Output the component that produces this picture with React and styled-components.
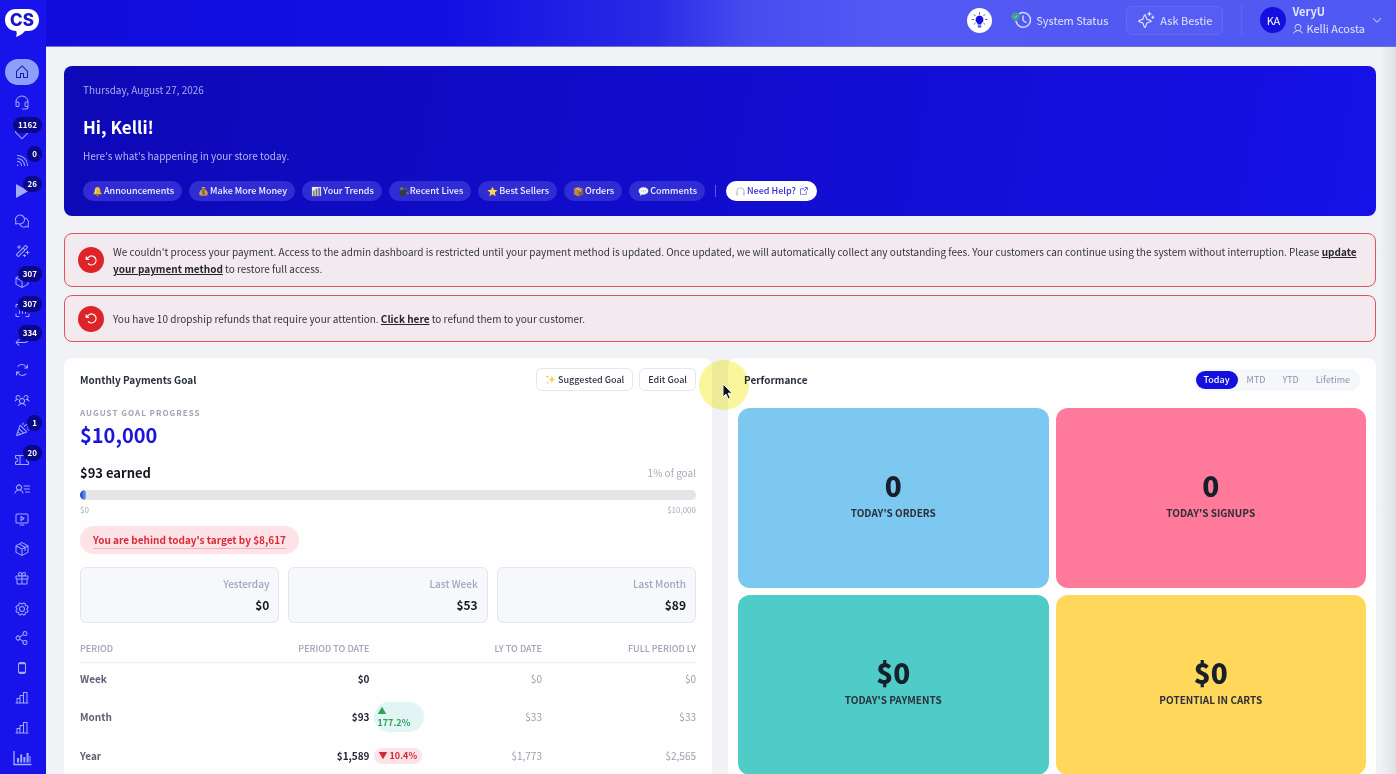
import React, { useState } from 'react';
import styled, { createGlobalStyle, css } from 'styled-components';
import {
  PiHouse,
  PiHeadset,
  PiCaretDown,
  PiDiamond,
  PiRss,
  PiChatsCircle,
  PiMagicWand,
  PiCube,
  PiArrowUDownLeft,
  PiArrowsClockwise,
  PiUsersThree,
  PiConfetti,
  PiTicket,
  PiUserList,
  PiMonitorPlay,
  PiPackage,
  PiGift,
  PiGear,
  PiShareNetwork,
  PiDeviceMobile,
  PiChartBar,
  PiSparkle,
  PiUser,
  PiArrowSquareOut,
  PiArrowCounterClockwiseBold,
} from 'react-icons/pi';

const GlobalStyle = createGlobalStyle`
  * {
    box-sizing: border-box;
  }

  body {
    margin: 0;
    background: #f0f2f6;
    color: #1f2937;
    font-family: 'Noto Sans CJK SC', 'Noto Sans', sans-serif;
    font-size: 10px;
    line-height: 16px;
  }

  button {
    font-family: inherit;
    cursor: pointer;
  }

  h1, h2, p {
    margin: 0;
  }
`;

const Shell = styled.div`
  display: grid;
  grid-template-columns: 46px minmax(0, 1fr);
  grid-template-rows: 47px minmax(0, 1fr);
  height: 100vh;
  overflow: hidden;
`;

/* Sidebar */

const Sidebar = styled.aside`
  grid-row: 1 / 3;
  display: flex;
  flex-direction: column;
  align-items: center;
  gap: 21px;
  padding: 9px 4px 3px 2px;
  background: #1713ea;
`;

const Logo = styled.a`
  display: block;
  height: 29px;
`;

const Nav = styled.nav`
  flex: 1;
  display: flex;
  flex-direction: column;
  justify-content: space-between;
`;

const NavItem = styled.a`
  position: relative;
  display: flex;
  align-items: center;
  justify-content: center;
  width: 34px;
  height: 26px;
  border-radius: 13px;
  color: ${({ $active }) => ($active ? '#1a1aa8' : '#a3abfa')};
  background: ${({ $active }) => ($active ? '#8e9ffa' : 'transparent')};
`;

const NavBadge = styled.span`
  position: absolute;
  top: -2px;
  right: -3px;
  padding: 0 5px;
  border-radius: 8px;
  background: #0a0788;
  color: #fff;
  font-size: 8px;
  font-weight: 700;
  line-height: 16px;
`;

/* Header */

const Header = styled.header`
  display: flex;
  align-items: center;
  justify-content: flex-end;
  padding: 0 13px 6px 0;
  background: linear-gradient(90deg, #110cdc 0%, #1310e2 30%, #2a2ae6 45%, #474cef 52%, #5359f3 62%, #5159f3 100%);
  border-bottom: 1px solid #6d71cf;
  color: #e2e5ff;
`;

const RoundButton = styled.button`
  display: flex;
  align-items: center;
  justify-content: center;
  width: 25px;
  height: 25px;
  margin-right: 18px;
  padding: 0;
  border: 0;
  border-radius: 50%;
  background: #fff;
`;

const HeaderButton = styled.button`
  display: flex;
  align-items: center;
  gap: 5px;
  height: 29px;
  padding: 0 ${({ $outlined }) => ($outlined ? '10px' : '0')};
  margin-left: ${({ $outlined }) => ($outlined ? '17px' : '0')};
  border: 1px solid ${({ $outlined }) => ($outlined ? '#636bf5' : 'transparent')};
  border-radius: 6px;
  background: ${({ $outlined }) => ($outlined ? '#565df4' : 'transparent')};
  color: inherit;
  font-size: 11px;
`;

const HeaderDivider = styled.span`
  width: 1px;
  height: 30px;
  margin: 0 18px;
  background: #5e66f5;
`;

const Account = styled.button`
  display: flex;
  align-items: center;
  gap: 6px;
  padding: 0;
  border: 0;
  background: transparent;
  color: #e2e5ff;
  text-align: left;
`;

const Avatar = styled.span`
  display: flex;
  align-items: center;
  justify-content: center;
  width: 26px;
  height: 26px;
  border-radius: 50%;
  background: #140fdf;
  font-size: 11px;
  color: #fff;
`;

const AccountName = styled.span`
  display: grid;
  font-size: 11px;
  line-height: 17px;
`;

const UserLine = styled.span`
  display: flex;
  align-items: center;
  gap: 2px;
`;

/* Main area */

const Main = styled.main`
  min-height: 0;
  overflow: hidden;
  padding: 19px 20px 0 18px;
  background: linear-gradient(270deg, #dfe1e6 0, #f0f2f6 16px);
`;

const Banner = styled.section`
  padding: 16px 19px 15px;
  border-radius: 8px;
  background: linear-gradient(100deg, #0d09b6 0%, #110ccb 45%, #1611e6 100%);
  color: #fff;
`;

const BannerDate = styled.p`
  color: #a9aaf0;
`;

const Greeting = styled.h1`
  margin: 16px 0 8px;
  font-size: 17px;
  font-weight: 700;
  line-height: 26px;
`;

const BannerText = styled.p`
  margin-bottom: 17px;
  color: #b6b7f3;
`;

const Shortcuts = styled.div`
  display: flex;
  flex-wrap: wrap;
  align-items: center;
  gap: 7px;
`;

const Shortcut = styled.a`
  display: flex;
  align-items: center;
  gap: 1px;
  height: 20px;
  padding: 0 8px 0 9px;
  border-radius: 10px;
  background: ${({ $light }) => ($light ? '#fff' : '#302cd4')};
  color: ${({ $light }) => ($light ? '#2f2bd0' : '#f1f1ff')};
  font-size: 9px;
  font-weight: 500;
  text-decoration: none;
`;

const ShortcutDivider = styled.span`
  width: 1px;
  height: 12px;
  margin: 0 3px;
  background: #5a57e0;
`;

const Alerts = styled.div`
  display: grid;
  gap: 8px;
  margin: 17px 0 16px;
`;

const Alert = styled.div`
  display: flex;
  align-items: center;
  gap: 9px;
  padding: 9px 13px;
  border: 1px solid #e0535b;
  border-radius: 8px;
  background: #f2eaef;
  min-height: 47px;
`;

const AlertIcon = styled.span`
  flex: none;
  display: flex;
  align-items: center;
  justify-content: center;
  width: 26px;
  height: 26px;
  border-radius: 50%;
  background: #de2429;
  color: #fff;
`;

const AlertText = styled.p`
  color: #33353f;
  line-height: 17px;

  a {
    color: #26262e;
    font-weight: 700;
  }
`;

const Columns = styled.div`
  display: grid;
  grid-template-columns: repeat(2, minmax(0, 1fr));
  gap: 16px;
`;

const Panel = styled.section`
  position: relative;
  padding: 10px ${({ $tight }) => ($tight ? '10px' : '16px')};
  border-radius: 8px;
  background: #fefefe;
`;

const PanelHeader = styled.div`
  display: flex;
  align-items: center;
  gap: 6px;
  height: 23px;
  padding: 0 ${({ $inset }) => ($inset ? '6px' : '0')};
`;

const PanelTitle = styled.h2`
  margin-right: auto;
  color: #2a3042;
  font-size: 10px;
  font-weight: 700;
`;

const SmallButton = styled.button`
  display: flex;
  align-items: center;
  gap: 2px;
  height: 23px;
  padding: 0 8px;
  border: 1px solid #e5e8f0;
  border-radius: 6px;
  background: #fff;
  color: #2f3444;
  font-size: 9px;
  font-weight: 500;
`;

const Overline = styled.p`
  margin-top: 14px;
  color: #a0a3b1;
  font-size: 8px;
  font-weight: 700;
  letter-spacing: 1px;
`;

const GoalAmount = styled.p`
  margin-bottom: 17px;
  color: #1b14d9;
  font-size: 20px;
  font-weight: 700;
  line-height: 27px;
`;

const Spread = styled.div`
  display: flex;
  align-items: center;
  justify-content: space-between;
  color: #a9acb8;
  font-size: ${({ $small }) => ($small ? '8px' : '10px')};
`;

const Earned = styled.strong`
  color: #14171f;
  font-size: 13px;
`;

const Track = styled.div`
  height: 10px;
  margin: 9px 0 2px;
  border-radius: 5px;
  background: #e3e4e8;
  overflow: hidden;
`;

const Fill = styled.div`
  height: 100%;
  border-radius: 5px;
  background: linear-gradient(90deg, #2a2bd6, #63b7d8);
`;

const BehindPill = styled.p`
  width: fit-content;
  margin: 8px 0 13px;
  padding: 5px 13px;
  border-radius: 14px;
  background: #fde3e7;
  color: #d92b35;
  font-weight: 700;
  line-height: 17px;

  span {
    display: block;
    border-bottom: 1px solid #efb5bc;
  }
`;

const Stats = styled.div`
  display: grid;
  grid-template-columns: repeat(3, minmax(0, 1fr));
  gap: 9px;
`;

const Stat = styled.div`
  display: grid;
  gap: 5px;
  padding: 8px 9px 9px;
  border: 1px solid #e3e6ee;
  border-radius: 6px;
  background: #f7f8fb;
  color: #a3a5bd;
  font-weight: 500;
  text-align: right;

  strong {
    color: #14171f;
    font-size: 12px;
  }
`;

const Table = styled.table`
  width: 100%;
  margin-top: 13px;
  border-collapse: collapse;
  table-layout: fixed;
  font-size: 10px;
`;

const cell = css`
  padding: 0;
  text-align: ${({ $left }) => ($left ? 'left' : 'right')};
  width: ${({ $width }) => $width || 'auto'};
`;

const Th = styled.th`
  ${cell}
  height: 26px;
  border-bottom: 1px solid #edf0f6;
  color: #a0a3b3;
  font-size: 9px;
  font-weight: 500;
`;

const Td = styled.td`
  ${cell}
  height: 33px;
  color: ${({ $strong, $left }) => ($strong ? '#23273a' : $left ? '#5d6177' : '#9a9dab')};
  font-weight: ${({ $strong, $left }) => ($strong || $left ? 700 : 400)};
`;

const TrendTd = styled.td`
  padding: 7px 0 7px 4px;
`;

const Trend = styled.span`
  display: ${({ $up }) => ($up ? 'block' : 'inline-block')};
  width: ${({ $up }) => ($up ? '50px' : 'auto')};
  padding: ${({ $up }) => ($up ? '3px 4px' : '0 5px')};
  border-radius: ${({ $up }) => ($up ? '15px' : '8px')};
  background: ${({ $up }) => ($up ? '#e3f4f5' : '#fde3e7')};
  color: ${({ $up }) => ($up ? '#2ba35b' : '#d02a33')};
  font-size: 9px;
  font-weight: 700;
  line-height: ${({ $up }) => ($up ? '12px' : '16px')};
`;

const Tabs = styled.div`
  display: flex;
  align-items: center;
  gap: 1px;
  padding: 2px;
  border-radius: 11px;
  background: #f5f7fb;
`;

const Tab = styled.button`
  height: 18px;
  padding: 0 8px;
  border: 0;
  border-radius: 9px;
  background: ${({ $active }) => ($active ? '#140fdc' : 'transparent')};
  color: ${({ $active }) => ($active ? '#fff' : '#8f92a6')};
  font-size: 9px;
  font-weight: ${({ $active }) => ($active ? 500 : 400)};
`;

const Tiles = styled.div`
  display: grid;
  grid-template-columns: repeat(2, minmax(0, 1fr));
  gap: 7px;
  margin-top: 17px;
`;

const Tile = styled.div`
  display: flex;
  flex-direction: column;
  align-items: center;
  justify-content: center;
  gap: 2px;
  height: 180px;
  padding-bottom: 8px;
  border-radius: 12px;
  background: ${({ $color }) => $color};
  color: #2b2f3a;
  font-size: 10px;
  font-weight: 700;

  strong {
    color: #15202b;
    font-size: 28px;
    line-height: 36px;
  }
`;

const Pointer = styled.div`
  position: absolute;
  top: 2px;
  left: -29px;
  display: flex;
  align-items: center;
  justify-content: center;
  width: 50px;
  height: 50px;
  padding: 13px 0 0 6px;
  border-radius: 50%;
  background: #faf79c;
  mix-blend-mode: multiply;
`;

/* Drawings */

const LogoMark = () => (
  <svg width="34" height="29" viewBox="0 0 34 29" aria-hidden="true">
    <path d="M11 0h12c6.500 0 11 4.500 11 11s-4.500 11-11 11h-3c-2 2.500-5 4.500-9 6 .8-2 .9-4 .3-6C5 22 0 17.500 0 11S4.500 0 11 0z" fill="#fff" />
    <text x="17" y="17" textAnchor="middle" fontFamily="Inter, sans-serif" fontWeight="800" fontSize="17" fill="#1713c9">
      CS
    </text>
  </svg>
);

const Bulb = () => (
  <svg width="17" height="17" viewBox="0 0 17 17" aria-hidden="true">
    <g stroke="#4a50d8" strokeWidth="1" strokeLinecap="round">
      <path d="M8.500 .7v1.600M3.300 2.700l1 1.100M13.700 2.700l-1 1.100M1 7.500h1.600M14.400 7.500H16M3.200 12.200l1-.9M13.800 12.200l-1-.9" />
    </g>
    <path d="M8.500 3.600a4 4 0 0 1 2.500 7.100c-.5.500-.6 1-.6 1.700H6.600c0-.7-.1-1.200-.6-1.700a4 4 0 0 1 2.500-7.100z" fill="#160fe0" />
    <path d="M6.700 13.300h3.600v1.500l-.9 1H7.600l-.9-1z" fill="#5961d6" />
  </svg>
);

const StatusClock = () => (
  <svg width="20" height="18" viewBox="0 0 20 18" aria-hidden="true">
    <path d="M8.500 2.600a7.300 7.300 0 1 1-3.500 7.600" fill="none" stroke="#d9dcff" strokeWidth="1.500" strokeLinecap="round" />
    <path d="M12 5v4.500l3 2" fill="none" stroke="#d9dcff" strokeWidth="1.400" strokeLinecap="round" />
    <circle cx="4.500" cy="5.500" r="4.200" fill="#3f9c94" />
    <path d="M3 5.600l1.200 1.200 2-2.300" fill="none" stroke="#9fd8d0" strokeWidth="1" />
  </svg>
);

const AnalyticsIcon = () => (
  <svg width="19" height="16" viewBox="0 0 19 16" fill="none" stroke="currentColor" aria-hidden="true">
    <path d="M1 1v13.500h17.500" strokeWidth="1.300" />
    <path d="M5 12.500V8M8.200 12.500V4.500M11.400 12.500V7M14.600 12.500V3" strokeWidth="2" />
    <path d="M17 12.500V6" strokeWidth="1" />
  </svg>
);

const StatsScanIcon = () => (
  <svg width="15" height="15" viewBox="0 0 15 15" fill="none" stroke="currentColor" strokeLinecap="round" aria-hidden="true">
    <path d="M1 4V1.500h3M11 1.500h3V4M1 11v2.500h3M11 13.500h3V11M4.500 10.500V8M7.500 10.500V5M10.500 10.500V7" />
  </svg>
);

const PlayIcon = () => (
  <svg width="14" height="16" viewBox="0 0 14 16" aria-hidden="true">
    <path d="M1 1l12.500 7L1 15z" fill="currentColor" />
  </svg>
);

const PhoneIcon = () => (
  <svg width="10" height="14" viewBox="0 0 10 14" fill="none" stroke="currentColor" aria-hidden="true">
    <rect x="1.500" y="1.500" width="7" height="11" rx="1.500" />
    <path d="M2 2.500h6M2 11.500h6" strokeWidth="1.400" />
  </svg>
);

const CursorIcon = () => (
  <svg width="13" height="18" viewBox="0 0 13 18" aria-hidden="true">
    <path d="M2 1v13l3-3 2.300 5 2-.9-2.200-4.900h4.100z" fill="#111" stroke="#fff" strokeWidth="1" />
  </svg>
);

const emojiShapes = {
  bell: (
    <>
      <path d="M6 1C3.500 1 3 3 3 5S2 8 1 9h10C10 8 9 7 9 5S8.500 1 6 1z" fill="#e9b63c" />
      <path d="M4.500 2.500C4 4 4.200 6 3.500 8" stroke="#fbe08b" fill="none" />
      <circle cx="6" cy="10" r="1.300" fill="#a87518" />
    </>
  ),
  money: (
    <>
      <path d="M4 1h4L7.300 3.300C10 5 11 7 10.500 9.500 10 11 2 11 1.500 9.500 1 7 2 5 4.700 3.300z" fill="#c9a25a" />
      <path d="M4 3.200h4" stroke="#7c5a24" />
      <path d="M7.500 5.500c-1-.7-3-.5-3 .6 0 1.300 3 .7 3 2 0 1.100-2 1.200-3 .5M6 4.700v5" stroke="#62471a" fill="none" strokeWidth=".8" />
    </>
  ),
  chart: (
    <>
      <rect x="1" y="1" width="10" height="10" fill="#e7edf2" />
      <path d="M3 11V5" stroke="#3ea968" strokeWidth="2" />
      <path d="M6 11V3" stroke="#d8464e" strokeWidth="2" />
      <path d="M9 11V2" stroke="#3a7fc4" strokeWidth="2" />
    </>
  ),
  camera: (
    <>
      <circle cx="4" cy="3" r="2.300" fill="#5a5e64" />
      <circle cx="8.500" cy="3.200" r="1.900" fill="#4a4e54" />
      <rect x="2" y="5" width="7" height="5.500" rx="1" fill="#36393e" />
      <path d="M9 7l2.500-1.500v4L9 8.500z" fill="#6a6e74" />
      <circle cx="4" cy="3" r=".8" fill="#9ca1a7" />
    </>
  ),
  star: <path d="M6 .7l1.600 3.500 3.900.4-2.900 2.600.8 3.900L6 9.100l-3.400 2 .8-3.900L.5 4.600l3.900-.4z" fill="#fbd348" />,
  box: (
    <>
      <path d="M6 1l5 2v6l-5 2.500L1 9V3z" fill="#b98450" />
      <path d="M6 5.500l5-2.500v6l-5 2.500z" fill="#8e5f35" />
      <path d="M3 2.200l5 2.200v2" stroke="#e8cda0" fill="none" />
    </>
  ),
  comment: (
    <>
      <path d="M6 1.300c3 0 5.300 1.700 5.300 4S9 9.500 6 9.500c-.6 0-1 0-1.500-.1L2 11l.6-2.400C1.400 7.800.7 6.700.7 5.300c0-2.300 2.300-4 5.300-4z" fill="#f4f6fb" />
      <path d="M3.500 5.500h5" stroke="#9aa0b5" strokeDasharray="1 1" />
    </>
  ),
  headphones: (
    <>
      <path d="M2 7.500V6a4 4 0 0 1 8 0v1.500" stroke="#b3b5ba" fill="none" />
      <rect x="1" y="6.500" width="2.600" height="4.200" rx="1.200" fill="#cfd0d4" />
      <rect x="8.400" y="6.500" width="2.600" height="4.200" rx="1.200" fill="#cfd0d4" />
    </>
  ),
  sparkles: (
    <>
      <path d="M7.500 2l1.100 3.100L11.500 6l-2.900 1.100L7.500 10 6.400 7.100 3.500 6l2.900-.9z" fill="#f7cf46" />
      <path d="M2.500 1l.5 1.400 1.500.5L3 3.500 2.500 5 2 3.500.5 2.900 2 2.400z" fill="#f9b870" />
      <path d="M3 8l.4 1.100 1.100.4-1.100.4L3 11l-.4-1.100-1.100-.4 1.100-.4z" fill="#f9b870" />
    </>
  ),
};

const Emoji = ({ name }) => (
  <svg width="11" height="11" viewBox="0 0 12 12" aria-hidden="true">
    {emojiShapes[name]}
  </svg>
);

const navItems = [
  { label: 'Home', icon: PiHouse },
  { label: 'Support', icon: PiHeadset },
  { label: 'Highlights', icon: PiDiamond, badge: '1162' },
  { label: 'Feed', icon: PiRss, badge: '0' },
  { label: 'Lives', icon: PlayIcon, badge: '26' },
  { label: 'Comments', icon: PiChatsCircle },
  { label: 'Magic', icon: PiMagicWand },
  { label: 'Inventory', icon: PiCube, badge: '307' },
  { label: 'Scan', icon: StatsScanIcon, badge: '307' },
  { label: 'Returns', icon: PiArrowUDownLeft, badge: '334' },
  { label: 'Sync', icon: PiArrowsClockwise },
  { label: 'Customers', icon: PiUsersThree },
  { label: 'Events', icon: PiConfetti, badge: '1' },
  { label: 'Coupons', icon: PiTicket, badge: '20' },
  { label: 'Contacts', icon: PiUserList },
  { label: 'Videos', icon: PiMonitorPlay },
  { label: 'Products', icon: PiPackage },
  { label: 'Gifts', icon: PiGift },
  { label: 'Settings', icon: PiGear },
  { label: 'Share', icon: PiShareNetwork },
  { label: 'Mobile', icon: PhoneIcon },
  { label: 'Reports', icon: PiChartBar },
  { label: 'Sales', icon: PiChartBar },
  { label: 'Analytics', icon: AnalyticsIcon },
];

const shortcuts = [
  ['bell', 'Announcements'],
  ['money', 'Make More Money'],
  ['chart', 'Your Trends'],
  ['camera', 'Recent Lives'],
  ['star', 'Best Sellers'],
  ['box', 'Orders'],
  ['comment', 'Comments'],
];

const stats = [
  ['Yesterday', '$0'],
  ['Last Week', '$53'],
  ['Last Month', '$89'],
];

const periods = [
  { name: 'Week', current: '$0', lastToDate: '$0', lastFull: '$0' },
  { name: 'Month', current: '$93', trend: '177.2%', up: true, lastToDate: '$33', lastFull: '$33' },
  { name: 'Year', current: '$1,589', trend: '10.4%', lastToDate: '$1,773', lastFull: '$2,565' },
];

const tiles = [
  ['0', "TODAY'S ORDERS", '#7cc8f0'],
  ['0', "TODAY'S SIGNUPS", '#ff7a9a'],
  ['$0', "TODAY'S PAYMENTS", '#50ccc8'],
  ['$0', 'POTENTIAL IN CARTS', '#ffd75a'],
];

const ranges = ['Today', 'MTD', 'YTD', 'Lifetime'];

const GoalPanel = () => (
  <Panel>
    <PanelHeader>
      <PanelTitle>Monthly Payments Goal</PanelTitle>
      <SmallButton>
        <Emoji name="sparkles" />
        Suggested Goal
      </SmallButton>
      <SmallButton>Edit Goal</SmallButton>
    </PanelHeader>
    <Overline>AUGUST GOAL PROGRESS</Overline>
    <GoalAmount>$10,000</GoalAmount>
    <Spread>
      <Earned>$93 earned</Earned>
      <span>1% of goal</span>
    </Spread>
    <Track>
      <Fill style={{ width: '1%' }} />
    </Track>
    <Spread $small>
      <span>$0</span>
      <span>$10,000</span>
    </Spread>
    <BehindPill>
      <span>You are behind today's target by $8,617</span>
    </BehindPill>
    <Stats>
      {stats.map(([label, value]) => (
        <Stat key={label}>
          {label}
          <strong>{value}</strong>
        </Stat>
      ))}
    </Stats>
    <Table>
      <thead>
        <tr>
          <Th $left $width="20%">PERIOD</Th>
          <Th $width="27%">PERIOD TO DATE</Th>
          <Th $width="10%" aria-label="Trend" />
          <Th $width="18%">LY TO DATE</Th>
          <Th $width="25%">FULL PERIOD LY</Th>
        </tr>
      </thead>
      <tbody>
        {periods.map((row) => (
          <tr key={row.name}>
            <Td $left>{row.name}</Td>
            <Td $strong>{row.current}</Td>
            <TrendTd>
              {row.trend && (
                <Trend $up={row.up}>
                  {row.up ? '▲' : '▼'} {row.trend}
                </Trend>
              )}
            </TrendTd>
            <Td>{row.lastToDate}</Td>
            <Td>{row.lastFull}</Td>
          </tr>
        ))}
      </tbody>
    </Table>
  </Panel>
);

const PerformancePanel = () => {
  const [range, setRange] = useState('Today');

  return (
    <Panel $tight>
      <PanelHeader $inset>
        <PanelTitle>Performance</PanelTitle>
        <Tabs>
          {ranges.map((name) => (
            <Tab key={name} $active={name === range} onClick={() => setRange(name)}>
              {name}
            </Tab>
          ))}
        </Tabs>
      </PanelHeader>
      <Tiles>
        {tiles.map(([value, label, color]) => (
          <Tile key={label} $color={color}>
            <strong>{value}</strong>
            {label}
          </Tile>
        ))}
      </Tiles>
      <Pointer>
        <CursorIcon />
      </Pointer>
    </Panel>
  );
};

const App = () => (
  <>
    <GlobalStyle />
    <Shell>
      <Sidebar>
        <Logo href="#" aria-label="Dashboard">
          <LogoMark />
        </Logo>
        <Nav>
          {navItems.map(({ label, icon: Icon, badge }) => (
            <NavItem key={label} href="#" aria-label={label} $active={label === 'Home'}>
              <Icon size={16} />
              {badge && <NavBadge>{badge}</NavBadge>}
            </NavItem>
          ))}
        </Nav>
      </Sidebar>
      <Header>
        <RoundButton aria-label="Tips">
          <Bulb />
        </RoundButton>
        <HeaderButton>
          <StatusClock />
          System Status
        </HeaderButton>
        <HeaderButton $outlined>
          <PiSparkle size={18} />
          Ask Bestie
        </HeaderButton>
        <HeaderDivider />
        <Account>
          <Avatar>KA</Avatar>
          <AccountName>
            <strong>VeryU</strong>
            <UserLine>
              <PiUser size={12} />
              Kelli Acosta
            </UserLine>
          </AccountName>
          <PiCaretDown size={12} />
        </Account>
      </Header>
      <Main>
        <Banner>
          <BannerDate>Thursday, August 27, 2026</BannerDate>
          <Greeting>Hi, Kelli!</Greeting>
          <BannerText>Here's what's happening in your store today.</BannerText>
          <Shortcuts>
            {shortcuts.map(([emoji, label]) => (
              <Shortcut key={label} href="#">
                <Emoji name={emoji} />
                {label}
              </Shortcut>
            ))}
            <ShortcutDivider />
            <Shortcut href="#" $light>
              <Emoji name="headphones" />
              Need Help?&nbsp;
              <PiArrowSquareOut size={10} />
            </Shortcut>
          </Shortcuts>
        </Banner>
        <Alerts>
          <Alert>
            <AlertIcon>
              <PiArrowCounterClockwiseBold size={13} />
            </AlertIcon>
            <AlertText>
              We couldn't process your payment. Access to the admin dashboard is restricted until your payment method is
              updated. Once updated, we will automatically collect any outstanding fees. Your customers can continue
              using the system without interruption. Please <a href="#">update your payment method</a> to restore full
              access.
            </AlertText>
          </Alert>
          <Alert>
            <AlertIcon>
              <PiArrowCounterClockwiseBold size={13} />
            </AlertIcon>
            <AlertText>
              You have 10 dropship refunds that require your attention. <a href="#">Click here</a> to refund them to
              your customer.
            </AlertText>
          </Alert>
        </Alerts>
        <Columns>
          <GoalPanel />
          <PerformancePanel />
        </Columns>
      </Main>
    </Shell>
  </>
);

export default App;
